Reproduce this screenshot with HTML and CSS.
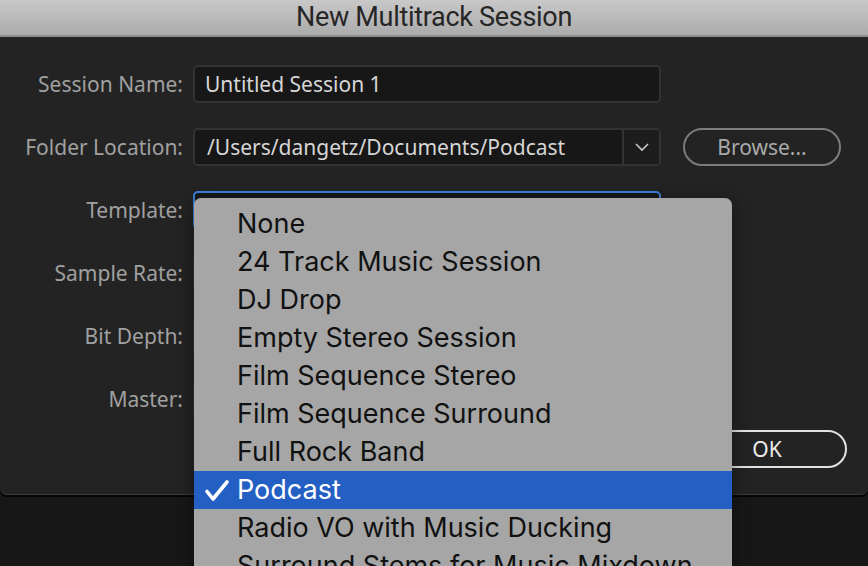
FILE: index.html
```html
<!DOCTYPE html>
<html>
<head>
<meta charset="utf-8">
<link rel="stylesheet" href="styles.css">
</head>
<body>
<div class="screen">
  <div class="titlebar">New Multitrack Session</div>
  <div class="dialog">
    <div class="form">
      <div class="lbl">Session Name:</div>
      <div class="field"><span class="val">Untitled Session 1</span></div>
      <div></div>

      <div class="lbl">Folder Location:</div>
      <div class="field combo">
        <span class="val">/Users/dangetz/Documents/Podcast</span>
        <span class="chev"><svg width="16" height="10" viewBox="0 0 16 10"><path d="M2 2 L8 8 L14 2" fill="none" stroke="#c8c8c8" stroke-width="1.6"/></svg></span>
      </div>
      <div class="btn browse">Browse...</div>

      <div class="lbl">Template:</div>
      <div class="field focus"></div>
      <div></div>

      <div class="lbl">Sample Rate:</div>
      <div class="field"></div>
      <div></div>

      <div class="lbl">Bit Depth:</div>
      <div class="field"></div>
      <div></div>

      <div class="lbl">Master:</div>
      <div class="field"></div>
      <div></div>
    </div>
    <div class="actions">
      <div class="btn cancel">Cancel</div>
      <div class="btn ok">OK</div>
    </div>
  </div>
  <div class="below"></div>

  <div class="menu">
    <div class="item">None</div>
    <div class="item">24 Track Music Session</div>
    <div class="item">DJ Drop</div>
    <div class="item">Empty Stereo Session</div>
    <div class="item">Film Sequence Stereo</div>
    <div class="item">Film Sequence Surround</div>
    <div class="item">Full Rock Band</div>
    <div class="item selected"><svg class="check" width="26" height="24" viewBox="0 0 26 24"><path d="M3 12.5 L9 20 L23 3" fill="none" stroke="#fff" stroke-width="3.6" stroke-linecap="round" stroke-linejoin="round"/></svg>Podcast</div>
    <div class="item">Radio VO with Music Ducking</div>
    <div class="item">Surround Stems for Music Mixdown</div>
  </div>
</div>
</body>
</html>
```

FILE: styles.css
```css
html, body {
  margin: 0;
  padding: 0;
  background: #171717;
  overflow: hidden;
}

.screen {
  position: relative;
  width: 868px;
  height: 566px;
  overflow: hidden;
  background: #171717;
}

.titlebar {
  height: 35px;
  border-bottom: 2px solid #8e8e8e;
  background: linear-gradient(#c8c8c8, #ababab);
  color: #262626;
  font-family: "Roboto", "Liberation Sans", sans-serif;
  font-size: 27px;
  line-height: 35px;
  text-align: center;
  letter-spacing: -0.3px;
}

.dialog {
  height: 429px;
  padding: 28px 21px 0 0;
  background: #232323;
  border-radius: 0 0 7px 7px;
  border-bottom: 1px solid #3a3a3a;
  box-shadow: 0 2px 0 #050505;
}

.form {
  display: grid;
  grid-template-columns: 183px 468px 170px;
  grid-auto-rows: 38px;
  column-gap: 10px;
  row-gap: 25px;
  align-items: center;
}

.lbl {
  text-align: right;
  color: #a0a0a0;
  font-family: "Noto Sans", "Open Sans", sans-serif;
  font-size: 21px;
}

.field {
  box-sizing: border-box;
  height: 38px;
  background: #171717;
  border: 2px solid #333;
  border-radius: 5px;
  display: flex;
  align-items: center;
  padding-left: 10px;
  color: #d6d6d6;
  font-family: "Noto Sans", "Open Sans", sans-serif;
  font-size: 21px;
}

.field.focus {
  border-color: #3c7fd9;
}

.combo {
  padding-right: 0;
}

.combo .val {
  flex: 1;
  padding-left: 2px;
}

.chev {
  width: 35px;
  height: 100%;
  border-left: 2px solid #333;
  display: flex;
  align-items: center;
  justify-content: center;
  background: #1d1d1d;
  border-radius: 0 4px 4px 0;
}

.btn {
  box-sizing: border-box;
  height: 38px;
  border: 2px solid #7c7c7c;
  border-radius: 19px;
  display: flex;
  align-items: center;
  justify-content: center;
  color: #a9a9a9;
  font-family: "Noto Sans", "Open Sans", sans-serif;
  font-size: 21px;
}

.browse {
  margin-left: 12px;
}

.actions {
  display: flex;
  justify-content: flex-end;
  gap: 20px;
  margin-top: 12px;
}

.actions .btn {
  width: 160px;
}

.btn.ok {
  border-color: #e2e2e2;
  color: #ececec;
}

.below {
  height: 80px;
}

.menu {
  position: absolute;
  left: 194px;
  top: 198px;
  width: 538px;
  height: 400px;
  padding-top: 7px;
  box-sizing: border-box;
  background: #a6a6a6;
  border-radius: 7px;
  box-shadow: 0 4px 16px rgba(0, 0, 0, 0.45);
  font-family: "Inter", "Roboto", sans-serif;
  font-size: 27px;
  color: #111;
}

.item {
  position: relative;
  height: 38px;
  line-height: 38px;
  padding-left: 43px;
  white-space: nowrap;
}

.item.selected {
  background: #245fc4;
  color: #fff;
}

.check {
  position: absolute;
  left: 10px;
  top: 8px;
}
```
